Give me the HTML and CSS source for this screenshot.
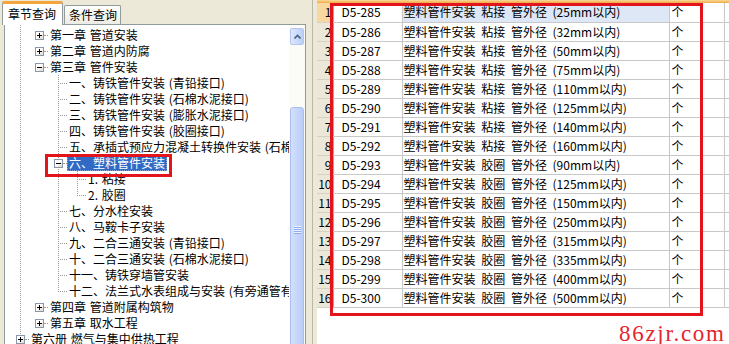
FILE: index.html
```html
<!DOCTYPE html>
<html>
<head lang="zh">
  <meta charset="UTF-8">
  <title>章节查询</title>
  <link rel="stylesheet" href="styles.css">
</head>
<body>
  <div class="app">
    <div class="left">
      <div class="tabs">
        <span class="tab on">章节查询</span>
        <span class="tab">条件查询</span>
      </div>
      <div class="treebox">
        <div class="tree">
          <div class="node l1"><span class="twig exp"><i class="box plus"></i></span><span class="txt">第一章 管道安装</span></div>
          <div class="node l1"><span class="twig exp"><i class="box plus"></i></span><span class="txt">第二章 管道内防腐</span></div>
          <div class="node l1"><span class="twig exp"><i class="box"></i></span><span class="txt">第三章 管件安装</span></div>
          <div class="node l2 v1"><span class="twig"></span><span class="txt">一、铸铁管件安装 (青铅接口)</span></div>
          <div class="node l2 v1"><span class="twig"></span><span class="txt">二、铸铁管件安装 (石棉水泥接口)</span></div>
          <div class="node l2 v1"><span class="twig"></span><span class="txt">三、铸铁管件安装 (膨胀水泥接口)</span></div>
          <div class="node l2 v1"><span class="twig"></span><span class="txt">四、铸铁管件安装 (胶圈接口)</span></div>
          <div class="node l2 v1"><span class="twig"></span><span class="txt">五、承插式预应力混凝土转换件安装 (石棉水泥接口)</span></div>
          <div class="node l2 v1"><span class="twig exp"><i class="box"></i></span><span class="txt sel">六、塑料管件安装</span></div>
          <div class="node l3 v2"><span class="twig"></span><span class="txt">1. 粘接</span></div>
          <div class="node l3 v2e"><span class="twig"></span><span class="txt">2. 胶圈</span></div>
          <div class="node l2 v1"><span class="twig"></span><span class="txt">七、分水栓安装</span></div>
          <div class="node l2 v1"><span class="twig"></span><span class="txt">八、马鞍卡子安装</span></div>
          <div class="node l2 v1"><span class="twig"></span><span class="txt">九、二合三通安装 (青铅接口)</span></div>
          <div class="node l2 v1"><span class="twig"></span><span class="txt">十、二合三通安装 (石棉水泥接口)</span></div>
          <div class="node l2 v1"><span class="twig"></span><span class="txt">十一、铸铁穿墙管安装</span></div>
          <div class="node l2 v1e"><span class="twig"></span><span class="txt">十二、法兰式水表组成与安装 (有旁通管有止回阀)</span></div>
          <div class="node l1"><span class="twig exp"><i class="box plus"></i></span><span class="txt">第四章 管道附属构筑物</span></div>
          <div class="node l1"><span class="twig exp"><i class="box plus"></i></span><span class="txt">第五章 取水工程</span></div>
          <div class="node l0"><span class="twig exp"><i class="box plus"></i></span><span class="txt">第六册 燃气与集中供热工程</span></div>
        </div>
        <div class="vscroll">
          <div class="up">
            <svg width="7" height="5" viewBox="0 0 7 5"><path d="M0.5 4.5 L3.5 1.5 L6.5 4.5" fill="none" stroke="#4d6185" stroke-width="1.6"/></svg>
          </div>
          <div class="thumb"><span class="grip"></span></div>
        </div>
      </div>
    </div>

    <div class="splitter"></div>

    <div class="right">
      <div class="topline"></div>
      <table class="grid">
        <colgroup>
          <col style="width:16px"><col style="width:69px"><col style="width:267px"><col style="width:55px"><col style="width:5px">
        </colgroup>
        <tr class="cur"><th>1</th><td class="code">D5-285</td><td class="name">塑料管件安装 粘接 管外径 (25mm以内)</td><td class="unit">个</td><td></td></tr>
        <tr><th>2</th><td class="code">D5-286</td><td class="name">塑料管件安装 粘接 管外径 (32mm以内)</td><td class="unit">个</td><td></td></tr>
        <tr><th>3</th><td class="code">D5-287</td><td class="name">塑料管件安装 粘接 管外径 (50mm以内)</td><td class="unit">个</td><td></td></tr>
        <tr><th>4</th><td class="code">D5-288</td><td class="name">塑料管件安装 粘接 管外径 (75mm以内)</td><td class="unit">个</td><td></td></tr>
        <tr><th>5</th><td class="code">D5-289</td><td class="name">塑料管件安装 粘接 管外径 (110mm以内)</td><td class="unit">个</td><td></td></tr>
        <tr><th>6</th><td class="code">D5-290</td><td class="name">塑料管件安装 粘接 管外径 (125mm以内)</td><td class="unit">个</td><td></td></tr>
        <tr><th>7</th><td class="code">D5-291</td><td class="name">塑料管件安装 粘接 管外径 (140mm以内)</td><td class="unit">个</td><td></td></tr>
        <tr><th>8</th><td class="code">D5-292</td><td class="name">塑料管件安装 粘接 管外径 (160mm以内)</td><td class="unit">个</td><td></td></tr>
        <tr><th>9</th><td class="code">D5-293</td><td class="name">塑料管件安装 胶圈 管外径 (90mm以内)</td><td class="unit">个</td><td></td></tr>
        <tr><th>10</th><td class="code">D5-294</td><td class="name">塑料管件安装 胶圈 管外径 (125mm以内)</td><td class="unit">个</td><td></td></tr>
        <tr><th>11</th><td class="code">D5-295</td><td class="name">塑料管件安装 胶圈 管外径 (150mm以内)</td><td class="unit">个</td><td></td></tr>
        <tr><th>12</th><td class="code">D5-296</td><td class="name">塑料管件安装 胶圈 管外径 (250mm以内)</td><td class="unit">个</td><td></td></tr>
        <tr><th>13</th><td class="code">D5-297</td><td class="name">塑料管件安装 胶圈 管外径 (315mm以内)</td><td class="unit">个</td><td></td></tr>
        <tr><th>14</th><td class="code">D5-298</td><td class="name">塑料管件安装 胶圈 管外径 (335mm以内)</td><td class="unit">个</td><td></td></tr>
        <tr><th>15</th><td class="code">D5-299</td><td class="name">塑料管件安装 胶圈 管外径 (400mm以内)</td><td class="unit">个</td><td></td></tr>
        <tr><th>16</th><td class="code">D5-300</td><td class="name">塑料管件安装 胶圈 管外径 (500mm以内)</td><td class="unit">个</td><td></td></tr>
      </table>
    </div>

    <!-- 红框标注 -->
    <div class="mark mark-tree"></div>
    <div class="mark mark-grid"></div>
    <div class="watermark">86zjr.com</div>
  </div>
</body>
</html>
```

FILE: styles.css
```css
* {
  margin: 0;
  padding: 0;
  box-sizing: border-box;
}
i {
  font-style: normal;
}
body {
  width: 729px;
  height: 344px;
  overflow: hidden;
  font: 12px "Noto Sans CJK SC", sans-serif;
  color: #000;
  background: #ece9d8;
  --dot: repeating-linear-gradient(to bottom, #9a9a9a 0 1px, transparent 1px 2px);
}
.app {
  position: relative;
  display: flex;
  height: 344px;
}

/* 左侧 章节树 */
.left {
  width: 306px;
  display: flex;
  flex-direction: column;
  padding-left: 4px;
}
.tabs {
  height: 24px;
  display: flex;
  align-items: flex-end;
  margin-left: -2px;
}
.tab {
  width: 57px;
  height: 19px;
  line-height: 17px;
  padding-left: 4px;
  margin-left: 1px;
  border: 1px solid #919b9c;
  border-bottom: none;
  border-radius: 2px 2px 0 0;
  background: linear-gradient(#fff, #ecebe5);
}
.tab.on {
  position: relative;
  z-index: 1;
  width: 61px;
  height: 24px;
  line-height: 19px;
  padding-left: 5px;
  margin-left: 0;
  margin-bottom: -1px;
  border-top: 3px solid #f3a43a;
  background: #fff;
}
.treebox {
  flex: 1;
  display: flex;
  overflow: hidden;
  background: #fff;
  border: 1px solid #919b9c;
  border-bottom: none;
}
.tree {
  flex: 1;
  overflow: hidden;
  padding-top: 2px;
  background: var(--dot) 15px 0 / 1px 100% no-repeat;
}
.node {
  height: 16px;
  display: flex;
  align-items: center;
  white-space: nowrap;
  word-spacing: 1px;
}
.l0 { padding-left: 6px; }
.l1 { padding-left: 25px; }
.l2 { padding-left: 44px; }
.l3 { padding-left: 63px; }

.node.v1 {
  background: var(--dot) 53px 0 / 1px 100% no-repeat;
}
.node.v1e {
  background: var(--dot) 53px 0 / 1px 8px no-repeat;
}
.node.v2 {
  background-image: var(--dot), var(--dot);
  background-position: 53px 0, 72px 0;
  background-size: 1px 100%, 1px 100%;
  background-repeat: no-repeat;
}
.node.v2e {
  background-image: var(--dot), var(--dot);
  background-position: 53px 0, 72px 0;
  background-size: 1px 100%, 1px 8px;
  background-repeat: no-repeat;
}

.twig {
  position: relative;
  flex: none;
  width: 18px;
  height: 16px;
}
.twig::before {
  content: "";
  position: absolute;
  left: 9px;
  right: 0;
  top: 8px;
  border-top: 1px dotted #9a9a9a;
}
.twig.exp::before {
  left: 14px;
}
.box {
  position: absolute;
  left: 5px;
  top: 4px;
  width: 9px;
  height: 9px;
  border: 1px solid #8a97a8;
  background: linear-gradient(135deg, #fff 40%, #dcd9cc);
}
.box::before,
.box.plus::after {
  content: "";
  position: absolute;
  background: #000;
}
.box::before {
  left: 1px;
  top: 3px;
  width: 5px;
  height: 1px;
}
.box.plus::after {
  left: 3px;
  top: 1px;
  width: 1px;
  height: 5px;
}
.txt {
  margin-left: 2px;
  line-height: 16px;
}
.txt.sel {
  margin-left: 0;
  padding: 0 2px;
  color: #fff;
  background: #316ac5;
  outline: 1px dotted #8aa4d6;
  outline-offset: -1px;
}

.vscroll {
  flex: none;
  width: 16px;
  overflow: hidden;
  padding: 3px 1px 0;
  background: #fbfbf8;
}
.up {
  height: 17px;
  display: flex;
  align-items: center;
  justify-content: center;
  border: 1px solid #b3c6f1;
  border-radius: 2px;
  background: linear-gradient(to right, #dde7fd, #bccff8);
}
.thumb {
  height: 246px;
  margin-top: 62px;
  display: flex;
  align-items: center;
  justify-content: center;
  border: 1px solid #a9bff0;
  border-radius: 3px;
  background: linear-gradient(to right, #d3e0fd, #b9cdf8);
}
.grip {
  width: 7px;
  height: 8px;
  background: repeating-linear-gradient(to bottom, #eef4ff 0 1px, #8eaaf0 1px 2px);
}

.splitter {
  width: 11px;
  background: linear-gradient(to right, #ece9d8 6px, #bcb8a8 6px 7px, #ece9d8 7px);
}

/* 右侧 定额列表 */
.right {
  flex: 1;
  overflow: hidden;
  background: #fff;
}
.topline {
  height: 3px;
  background: linear-gradient(#fcd99a, #efaa45);
}
.grid {
  width: 412px;
  table-layout: fixed;
  border-collapse: collapse;
}
.grid tr {
  height: 19px;
}
.grid th,
.grid td {
  padding: 0;
  line-height: 18px;
  white-space: nowrap;
  overflow: hidden;
  border-bottom: 1px solid #c8c8c8;
  border-right: 1px solid #c8c8c8;
}
.grid th {
  font-weight: normal;
  text-align: right;
  padding-right: 1px;
  background: #ebe8da;
  border-bottom-color: #d6d2c2;
  border-right-color: #aca899;
}
.grid td.code {
  padding-left: 8px;
}
.grid td.name {
  padding-left: 1px;
  word-spacing: 3px;
}
.grid td.unit {
  padding-left: 2px;
}
.grid tr.cur th {
  background: #f8d7a0;
}
.grid tr.cur td.name {
  background: #dde7f5;
}

.mark {
  position: absolute;
  border: 3px solid #e3141b;
}
.mark-tree {
  left: 45px;
  top: 154px;
  width: 127px;
  height: 23px;
}
.mark-grid {
  left: 330px;
  top: 3px;
  width: 373px;
  height: 313px;
}
.watermark {
  position: absolute;
  left: 619px;
  top: 321px;
  font: 23px/26px "Liberation Serif", serif;
  letter-spacing: 1.7px;
  color: #e3262e;
}
```
